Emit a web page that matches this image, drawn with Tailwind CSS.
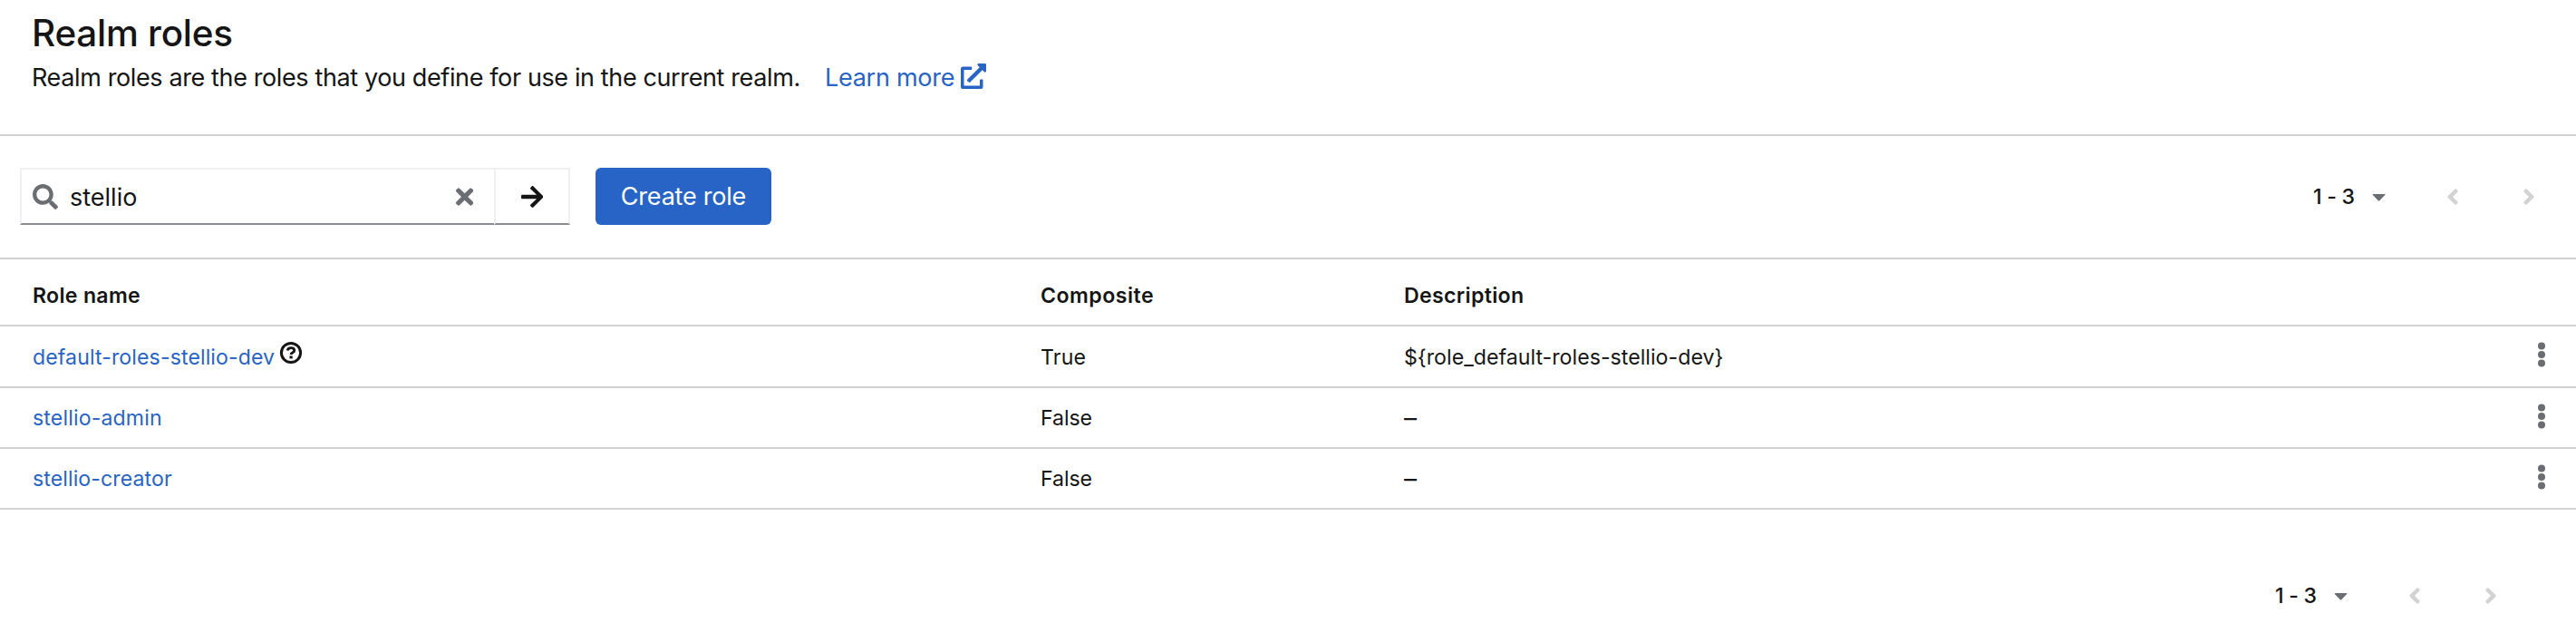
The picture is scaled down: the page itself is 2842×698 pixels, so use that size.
<!DOCTYPE html>
<html lang="en">
<head>
<meta charset="utf-8">
<title>Realm roles</title>
<script src="https://cdn.jsdelivr.net/npm/@tailwindcss/browser@4"></script>
</head>
<body class="bg-white text-[#151515] font-['Inter','Open_Sans',sans-serif] w-[2842px] h-[698px] overflow-hidden">
<svg class="hidden">
  <symbol id="caret" viewBox="0 0 320 512"><path d="M24 192h272c10 0 14 12 7 19L170 350c-6 6-14 6-20 0L17 211c-7-7-3-19 7-19z"/></symbol>
  <symbol id="left" viewBox="0 0 256 512"><path d="M31.7 239l136-136c9.4-9.4 24.6-9.4 33.9 0l22.6 22.6c9.4 9.4 9.4 24.6 0 33.9L127.9 256l96.4 96.4c9.4 9.4 9.4 24.6 0 33.9L201.7 409c-9.4 9.4-24.6 9.4-33.9 0l-136-136c-9.5-9.4-9.5-24.6-.1-34z"/></symbol>
  <symbol id="kebab" viewBox="0 0 8 28"><circle cx="4" cy="4.4" r="4"/><circle cx="4" cy="14" r="4"/><circle cx="4" cy="23.6" r="4"/></symbol>
</svg>

<header class="h-[150px] border-b-2 border-[#d2d2d2] pt-[15px] pl-[35px]">
  <h1 class="text-[40.4px] leading-[44px] font-medium tracking-[-0.24px]">Realm roles</h1>
  <div class="mt-[9px] flex h-9 text-[27px] leading-9">
    <p class="w-[875px] whitespace-nowrap tracking-[-0.38px]">Realm roles are the roles that you define for use in the current realm.</p>
    <a class="flex text-[#2864c5] tracking-[-0.27px]"><span class="w-[150px] whitespace-nowrap">Learn more</span>
      <svg class="mt-[2px] size-7" viewBox="0 0 512 512" fill="currentColor"><path d="M432,320H400a16,16,0,0,0-16,16V448H64V128H208a16,16,0,0,0,16-16V80a16,16,0,0,0-16-16H48A48,48,0,0,0,0,112V464a48,48,0,0,0,48,48H400a48,48,0,0,0,48-48V336A16,16,0,0,0,432,320ZM488,0h-128c-21.37,0-32.05,25.91-17,41l35.73,35.73L135,320.37a24,24,0,0,0,0,34L157.67,377a24,24,0,0,0,34,0L435.28,133.32,471,169c15,15,41,4.5,41-17V24A24,24,0,0,0,488,0Z"/></svg>
    </a>
  </div>
</header>

<section class="flex h-[136px] items-start border-b-2 border-[#d2d2d2] pt-[35px] pl-[22px] pr-[45px]">
  <div class="flex h-[63px] w-[525px] items-center border-2 border-[#f0f0f0] border-b-[#8a8d90] pl-3">
    <svg class="size-7 fill-[#6a6e73]" viewBox="0 0 512 512"><path d="M505 442.7L405.3 343c-4.5-4.5-10.6-7-17-7H372c27.6-35.3 44-79.7 44-128C416 93.1 322.9 0 208 0S0 93.1 0 208s93.1 208 208 208c48.3 0 92.7-16.4 128-44v16.3c0 6.4 2.5 12.5 7 17l99.7 99.7c9.4 9.4 24.6 9.4 33.9 0l28.3-28.3c9.4-9.4 9.4-24.6.1-34zM208 336c-70.7 0-128-57.2-128-128 0-70.7 57.2-128 128-128 70.7 0 128 57.2 128 128 0 70.7-57.2 128-128 128z"/></svg>
    <span class="ml-[13px] mt-0.5 flex-1 text-[27px] leading-9">stellio</span>
    <svg class="mr-[23px] h-7 w-[19.25px] fill-[#6a6e73]" viewBox="0 0 352 512"><path d="M242.72 256l100.07-100.07c12.28-12.28 12.28-32.19 0-44.48l-22.24-22.24c-12.28-12.28-32.19-12.28-44.48 0L176 189.28 75.93 89.21c-12.28-12.28-32.19-12.28-44.48 0L9.21 111.45c-12.28 12.28-12.28 32.19 0 44.48L109.28 256 9.21 356.07c-12.28 12.28-12.28 32.19 0 44.48l22.24 22.24c12.28 12.28 32.2 12.28 44.48 0L176 322.72l100.07 100.07c12.28 12.28 32.2 12.28 44.48 0l22.24-22.24c12.28-12.28 12.28-32.19 0-44.48L242.72 256z"/></svg>
  </div>
  <div class="-ml-0.5 flex h-[63px] w-[84px] items-center justify-center border-2 border-[#f0f0f0] border-b-[#8a8d90]">
    <svg class="h-7 w-[24.5px] fill-[#151515]" viewBox="0 0 448 512"><path d="M190.5 66.9l22.2-22.2c9.4-9.4 24.6-9.4 33.9 0L441 239c9.4 9.4 9.4 24.6 0 33.9L246.6 467.3c-9.4 9.4-24.6 9.4-33.9 0l-22.2-22.2c-9.5-9.5-9.3-25 .4-34.3L311.4 296H24c-13.3 0-24-10.7-24-24v-32c0-13.3 10.7-24 24-24h287.4L190.9 101.2c-9.8-9.3-10-24.8-.4-34.3z"/></svg>
  </div>
  <button class="ml-7 h-[63px] w-[194px] rounded-md bg-[#2864c5] pt-0.5 text-[27px] tracking-[-0.22px] text-white">Create role</button>
  <nav class="ml-auto mt-[18px] flex h-7 items-center">
    <span class="w-[64px] whitespace-nowrap text-[23.1px] leading-7 font-medium tracking-[-0.27px]">1 - 3</span>
    <svg class="ml-px h-6 w-[15px] fill-[#6a6e73]"><use href="#caret"/></svg>
    <svg class="ml-[67px] h-7 w-[14px] fill-[#d2d2d2]"><use href="#left"/></svg>
    <svg class="ml-[70px] h-7 w-[14px] -scale-x-100 fill-[#d2d2d2]"><use href="#left"/></svg>
  </nav>
</section>

<main class="text-[23.1px] leading-8">
  <div class="flex h-[74px] items-center border-b-2 border-[#d2d2d2] pt-[7px] pl-9 font-semibold">
    <span class="w-[1112px] tracking-[0.31px]">Role name</span>
    <span class="w-[401px] tracking-[0.5px]">Composite</span>
    <span class="tracking-[0.34px]">Description</span>
  </div>
  <div class="flex h-[68px] items-center border-b-2 border-[#d2d2d2] pl-9 pr-[34px]">
    <span class="flex w-[1112px] items-center"><a class="mt-px w-[272px] whitespace-nowrap tracking-[0.11px] text-[#2864c5]">default-roles-stellio-dev</a>
      <svg class="mb-2 size-[26px]" viewBox="0 0 26 26" fill="none" stroke="#151515"><circle cx="13" cy="13" r="10.6" stroke-width="3"/><path d="M9.2 10.6C9.600 8.400 11.200 7.600 13 7.600c2.200 0 3.700 1 3.700 2.800 0 2.400-3.600 2.200-3.600 4.500" stroke-width="2.900"/><path d="M13.100 16.400v3" stroke-width="3.200"/></svg></span>
    <span class="mt-px w-[401px] tracking-[0.18px]">True</span>
    <span class="mt-px flex-1 tracking-[0.05px]">${role_default-roles-stellio-dev}</span>
    <svg class="mb-1 h-7 w-2 fill-[#6a6e73]"><use href="#kebab"/></svg>
  </div>
  <div class="flex h-[67px] items-center border-b-2 border-[#d2d2d2] pl-9 pr-[34px]">
    <a class="w-[1112px] tracking-[0.15px] text-[#2864c5]">stellio-admin</a>
    <span class="w-[401px] tracking-[-0.08px]">False</span>
    <span class="flex-1 text-[28px]">–</span>
    <svg class="mb-[3px] h-7 w-2 fill-[#6a6e73]"><use href="#kebab"/></svg>
  </div>
  <div class="flex h-[67px] items-center border-b-2 border-[#d2d2d2] pl-9 pr-[34px]">
    <a class="w-[1112px] tracking-[0.1px] text-[#2864c5]">stellio-creator</a>
    <span class="w-[401px] tracking-[-0.08px]">False</span>
    <span class="flex-1 text-[28px]">–</span>
    <svg class="mb-[3px] h-7 w-2 fill-[#6a6e73]"><use href="#kebab"/></svg>
  </div>
</main>

<footer class="flex justify-end pt-[81px] pr-[87px]">
  <nav class="flex h-7 items-center">
    <span class="w-[64px] whitespace-nowrap text-[23.1px] leading-7 font-medium tracking-[-0.27px]">1 - 3</span>
    <svg class="ml-px h-6 w-[15px] fill-[#6a6e73]"><use href="#caret"/></svg>
    <svg class="ml-[67px] h-7 w-[14px] fill-[#d2d2d2]"><use href="#left"/></svg>
    <svg class="ml-[70px] h-7 w-[14px] -scale-x-100 fill-[#d2d2d2]"><use href="#left"/></svg>
  </nav>
</footer>
</body>
</html>
